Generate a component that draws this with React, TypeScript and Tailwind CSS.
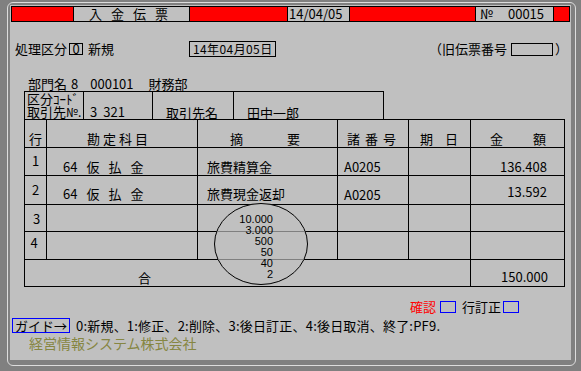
import React from "react";

function Cell({ w, className = "", children }: { w: string; className?: string; children?: React.ReactNode }) {
  return <div className={`${w} shrink-0 border-r border-black ${className}`}>{children}</div>;
}

export default function App() {
  return (
    <div className="w-[581px] h-[371px] bg-[#808080] pt-[2px] pl-[7px] pr-[5px] pb-[5px] font-['Noto_Sans_CJK_JP',sans-serif] text-[13px] leading-[14px] text-black overflow-hidden whitespace-nowrap">
      <div className="h-full border border-[#dcdcdc] rounded-[6px] pt-[2px] pl-[2px] pr-[4px] pb-[5px]">
        <div className="relative h-full w-[561px] bg-[#c0c0c0] flex flex-col">
          {/* header bar */}
          <div className="ml-[1px] mt-[1px] w-[559px] h-[16px] border border-black flex shrink-0">
            <div className="w-[61px] shrink-0 bg-[#ff0000]" />
            <div className="w-[116px] shrink-0 border-l border-black flex items-center pl-[15px] gap-[9px]">
              <span>入</span>
              <span>金</span>
              <span>伝</span>
              <span>票</span>
            </div>
            <div className="w-[98px] shrink-0 border-l border-black bg-[#ff0000]" />
            <div className="w-[62px] shrink-0 border-l border-black flex items-center pl-[1px]">14/04/05</div>
            <div className="w-[126px] shrink-0 border-l border-black bg-[#ff0000]" />
            <div className="w-[78px] shrink-0 border-l border-black flex items-center pl-[4px]">
              <span>№</span>
              <span className="ml-[15px]">00015</span>
            </div>
            <div className="w-[16px] shrink-0 border-l border-black bg-[#ff0000]" />
          </div>

          {/* row 2 */}
          <div className="mt-[19px] h-[16px] flex items-center shrink-0">
            <div className="w-[179px] shrink-0 pl-[5px] flex items-center">
              <span>処理区分</span>
              <span className="ml-[2px] w-[14px] h-[12px] border border-black flex items-center justify-center leading-[10px]">0</span>
              <span className="ml-[5px]">新規</span>
            </div>
            <div className="w-[87px] h-[16px] shrink-0 border border-black flex items-center pl-[3px] text-[12px] tracking-[0.4px]">
              14年04月05日
            </div>
            <div className="ml-[153px] flex items-center">
              <span>（旧伝票番号</span>
              <span className="ml-[4px] w-[42px] h-[13px] border border-black" />
              <span className="ml-[2px]">）</span>
            </div>
          </div>

          {/* row 3 */}
          <div className="mt-[19px] h-[15px] flex items-center pl-[18px] shrink-0 leading-[13px]">
            <span>部門名</span>
            <span className="ml-[4px]">8</span>
            <span className="ml-[12px]">000101</span>
            <span className="ml-[15px]">財務部</span>
          </div>

          {/* 区分コード box */}
          <div className="ml-[14px] w-[360px] h-[28px] border-l border-t border-r border-black flex shrink-0">
            <Cell w="w-[59px]" className="pl-[2px] leading-[13px]">
              <div>区分ｺｰﾄﾞ</div>
              <div>
                取引先<span className="text-[12px]">№.</span>
              </div>
            </Cell>
            <Cell w="w-[69px]" className="flex items-end pl-[6px] pb-[1px] leading-[13px]">
              <span>3</span>
              <span className="ml-[6px]">321</span>
            </Cell>
            <Cell w="w-[81px]" className="flex items-end pl-[13px] leading-[13px]">取引先名</Cell>
            <div className="flex-1 flex items-end pl-[13px] leading-[13px]">田中一郎</div>
          </div>

          {/* main table */}
          <div className="ml-[14px] w-[541px] border border-black flex flex-col shrink-0">
            {/* header */}
            <div className="h-[28px] border-b border-black flex">
              <Cell w="w-[22px]" className="flex items-end justify-center pb-[1px]">行</Cell>
              <Cell w="w-[151px]" className="flex items-end pl-[40px] gap-[3px] pb-[1px]">
                <span>勘</span>
                <span>定</span>
                <span>科</span>
                <span>目</span>
              </Cell>
              <Cell w="w-[140px]" className="flex items-end pl-[32px] gap-[44px] pb-[1px]">
                <span>摘</span>
                <span>要</span>
              </Cell>
              <Cell w="w-[71px]" className="flex items-end pl-[9px] gap-[5px] pb-[1px]">
                <span>諸</span>
                <span>番</span>
                <span>号</span>
              </Cell>
              <Cell w="w-[62px]" className="flex items-end pl-[11px] gap-[12px] pb-[1px]">
                <span>期</span>
                <span>日</span>
              </Cell>
              <div className="flex-1 flex items-end pl-[19px] gap-[30px] pb-[1px]">
                <span>金</span>
                <span>額</span>
              </div>
            </div>

            {/* row 1 */}
            <div className="h-[28px] border-b border-black flex">
              <Cell w="w-[22px]" className="flex justify-center pt-[6px]">1</Cell>
              <Cell w="w-[151px]" className="flex items-end pl-[16px] gap-[9px] pb-[1px]">
                <span>64</span>
                <span>仮</span>
                <span>払</span>
                <span>金</span>
              </Cell>
              <Cell w="w-[140px]" className="flex items-end pl-[9px] pb-[1px]">旅費精算金</Cell>
              <Cell w="w-[71px]" className="flex items-end pl-[6px] pb-[1px]">A0205</Cell>
              <Cell w="w-[62px]" />
              <div className="flex-1 flex items-end justify-end pr-[17px] pb-[1px]">136.408</div>
            </div>

            {/* row 2 */}
            <div className="h-[29px] border-b border-black flex">
              <Cell w="w-[22px]" className="flex justify-center pt-[7px]">2</Cell>
              <Cell w="w-[151px]" className="flex items-end pl-[16px] gap-[9px] pb-[3px]">
                <span>64</span>
                <span>仮</span>
                <span>払</span>
                <span>金</span>
              </Cell>
              <Cell w="w-[140px]" className="flex items-end pl-[9px] pb-[3px]">旅費現金返却</Cell>
              <Cell w="w-[71px]" className="flex items-end pl-[6px] pb-[2px]">A0205</Cell>
              <Cell w="w-[62px]" />
              <div className="flex-1 flex items-end justify-end pr-[17px] pb-[5px]">13.592</div>
            </div>

            {/* row 3 */}
            <div className="h-[27px] border-b border-black flex">
              <Cell w="w-[22px]" className="flex justify-center pt-[7px] pl-[2px]">3</Cell>
              <Cell w="w-[151px]" />
              <Cell w="w-[140px]" />
              <Cell w="w-[71px]" />
              <Cell w="w-[62px]" />
              <div className="flex-1" />
            </div>

            {/* row 4 */}
            <div className="h-[28px] border-b border-black flex">
              <Cell w="w-[22px]" className="flex justify-center pt-[4px] pr-[3px]">4</Cell>
              <Cell w="w-[151px]" />
              <Cell w="w-[140px]" />
              <Cell w="w-[71px]" />
              <Cell w="w-[62px]" />
              <div className="flex-1" />
            </div>

            {/* total */}
            <div className="h-[26px] flex">
              <Cell w="w-[446px]" className="flex items-end pl-[113px] pb-[1px]">合</Cell>
              <div className="flex-1 flex items-end justify-end pr-[16px] pb-[2px]">150.000</div>
            </div>
          </div>

          {/* 確認 row */}
          <div className="mt-[13px] h-[14px] flex items-center ml-[400px] shrink-0">
            <span className="text-[#ff0000]">確認</span>
            <span className="ml-[4px] w-[16px] h-[12px] border border-[#0000ff]" />
            <span className="ml-[6px]">行訂正</span>
            <span className="ml-[2px] w-[16px] h-[12px] border border-[#0000ff]" />
          </div>

          {/* guide row */}
          <div className="mt-[4px] h-[15px] flex items-center shrink-0">
            <div className="ml-[2px] w-[58px] h-[15px] border border-[#0000ff] flex items-center pl-[2px]">ガイド→</div>
            <span className="ml-[6px] tracking-[0.2px]">0:新規、1:修正、2:削除、3:後日訂正、4:後日取消、終了:PF9.</span>
          </div>

          {/* company */}
          <div className="mt-[2px] h-[16px] flex items-center ml-[19px] text-[14px] leading-[16px] text-[#868642] shrink-0">
            経営情報システム株式会社
          </div>

          {/* circle annotation overlay */}
          <svg className="absolute left-[204px] top-[198px]" width="95" height="83" viewBox="0 0 95 83">
            <defs>
              <clipPath id="circ">
                <ellipse cx="47" cy="41" rx="46" ry="40" />
              </clipPath>
            </defs>
            <ellipse cx="47" cy="41" rx="46.5" ry="40.5" fill="#c0c0c0" stroke="#000" strokeWidth="1" />
            <g clipPath="url(#circ)" stroke="#808080" strokeWidth="1">
              <line x1="0" x2="95" y1="28.5" y2="28.5" />
              <line x1="0" x2="95" y1="56.5" y2="56.5" />
            </g>
            <g fontFamily="Liberation Sans, sans-serif" fontSize="11" textAnchor="end" fill="#000">
              <text x="59" y="20">10.000</text>
              <text x="59" y="31">3.000</text>
              <text x="59" y="42">500</text>
              <text x="59" y="53">50</text>
              <text x="59" y="64">40</text>
              <text x="59" y="75">2</text>
            </g>
          </svg>
        </div>
      </div>
    </div>
  );
}
